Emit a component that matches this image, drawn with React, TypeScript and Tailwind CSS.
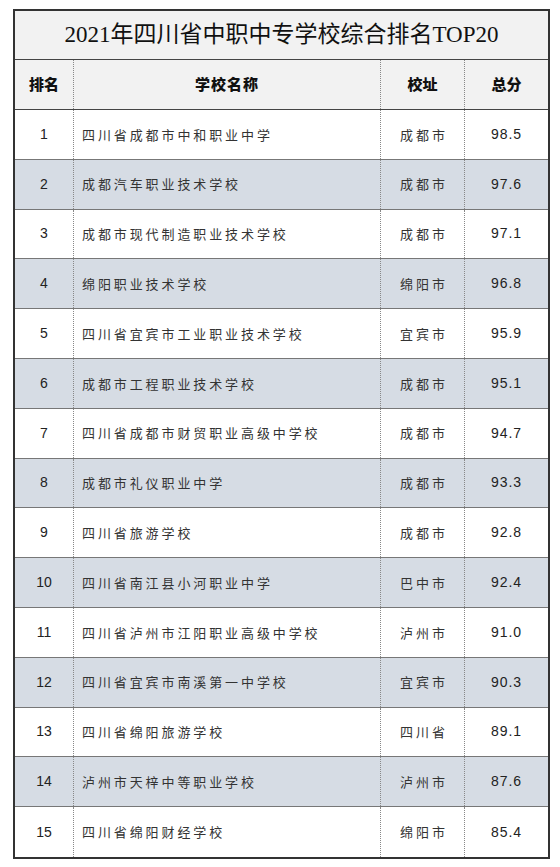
const rows: [number, string, string, string][] = [
  [1, "四川省成都市中和职业中学", "成都市", "98.5"],
  [2, "成都汽车职业技术学校", "成都市", "97.6"],
  [3, "成都市现代制造职业技术学校", "成都市", "97.1"],
  [4, "绵阳职业技术学校", "绵阳市", "96.8"],
  [5, "四川省宜宾市工业职业技术学校", "宜宾市", "95.9"],
  [6, "成都市工程职业技术学校", "成都市", "95.1"],
  [7, "四川省成都市财贸职业高级中学校", "成都市", "94.7"],
  [8, "成都市礼仪职业中学", "成都市", "93.3"],
  [9, "四川省旅游学校", "成都市", "92.8"],
  [10, "四川省南江县小河职业中学", "巴中市", "92.4"],
  [11, "四川省泸州市江阳职业高级中学校", "泸州市", "91.0"],
  [12, "四川省宜宾市南溪第一中学校", "宜宾市", "90.3"],
  [13, "四川省绵阳旅游学校", "四川省", "89.1"],
  [14, "泸州市天梓中等职业学校", "泸州市", "87.6"],
  [15, "四川省绵阳财经学校", "绵阳市", "85.4"],
];

const cjk = "font-['Noto_Sans_CJK_SC',sans-serif]";
const latin = "font-['Liberation_Sans','Noto_Sans_CJK_SC',sans-serif]";

export default function App() {
  return (
    <div className="min-h-[867px] bg-white pl-[13px] pt-[9px]">
      <div className="w-[537px] border-2 border-[#333]">
        <div className="flex h-[49px] items-center justify-center border-b border-[#444] bg-[#f2f2f2] font-['Liberation_Serif','Noto_Sans_CJK_SC',serif] text-[23px] text-[#111]">
          2021年四川省中职中专学校综合排名TOP20
        </div>

        <div
          className={`grid h-[50px] grid-cols-[58px_307px_84px_84px] border-b border-[#444] bg-[#f2f2f2] text-[15px] font-black text-[#111] ${cjk}`}
        >
          <div className="flex items-center justify-center">排名</div>
          <div className="flex items-center justify-center border-l border-dotted border-[#888] tracking-[1px]">
            学校名称
          </div>
          <div className="flex items-center justify-center border-l border-dotted border-[#888]">校址</div>
          <div className="flex items-center justify-center border-l border-dotted border-[#888]">总分</div>
        </div>

        {rows.map(([rank, name, city, score], i) => (
          <div
            key={rank}
            className={`grid h-[49.8px] grid-cols-[58px_307px_84px_84px] ${
              i < rows.length - 1 ? "border-b border-[#777]" : ""
            } ${rank % 2 === 0 ? "bg-[#d6dce4]" : "bg-white"}`}
          >
            <div className={`flex items-center justify-center text-[14px] text-[#222] ${latin}`}>{rank}</div>
            <div
              className={`flex items-center border-l border-dotted border-[#888] pl-2 text-[13px] tracking-[2.9px] text-[#333] ${cjk}`}
            >
              {name}
            </div>
            <div
              className={`flex items-center justify-center border-l border-dotted border-[#888] pl-[3px] text-[13px] tracking-[3px] text-[#333] ${cjk}`}
            >
              {city}
            </div>
            <div
              className={`flex items-center justify-center border-l border-dotted border-[#888] text-[14px] tracking-[1px] text-[#222] ${latin}`}
            >
              {score}
            </div>
          </div>
        ))}
      </div>
    </div>
  );
}
